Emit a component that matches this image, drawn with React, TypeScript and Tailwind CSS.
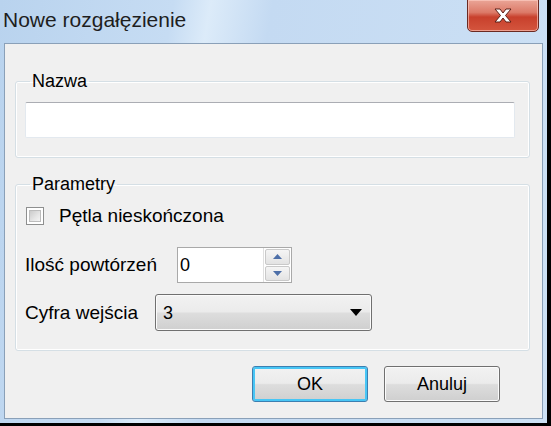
import React from "react";

function CloseX() {
  return (
    <svg width="18" height="15" viewBox="0 0 18 15">
      <polygon
        points="1,1 6,1 9,5 12,1 17,1 11.5,7.5 17,14 12,14 9,10 6,14 1,14 6.5,7.5"
        fill="#ffffff"
        stroke="#5a1e16"
        strokeWidth="1"
        strokeLinejoin="round"
      />
    </svg>
  );
}

function Win7Button({ label, focused }: { label: string; focused?: boolean }) {
  return (
    <div
      className={
        "w-[116px] h-[36px] rounded-[3px] border flex items-center justify-center text-[18px] text-black " +
        (focused
          ? "border-[#3c7fb1] shadow-[inset_0_0_0_2px_#48c6f5]"
          : "border-[#707070] shadow-[inset_0_0_0_1px_#fbfbfb]")
      }
      style={{
        background:
          "linear-gradient(180deg,#f2f2f2 0%,#ebebeb 48%,#dddddd 52%,#cfcfcf 100%)",
      }}
    >
      {label}
    </div>
  );
}

export default function App() {
  return (
    <div className="w-[551px] h-[426px] bg-black overflow-hidden font-['Liberation_Sans',Arial,sans-serif] text-black">
      <div className="w-[547px] h-[423px] flex flex-col bg-[linear-gradient(100deg,#b9d3ee_0%,#c6dcf3_28%,#dcebf9_34%,#c4daf2_44%,#cde1f5_100%)]">
        {/* Title bar */}
        <div className="h-[43px] flex items-start justify-between pl-[3px] pr-[8px]">
          <div className="mt-[7px] text-[21px] leading-[26px] text-[#1e1e1e]">Nowe rozgałęzienie</div>
          <div className="w-[72px] h-[33px] -mt-[1px] rounded-b-[5px] border border-[#6b2a22] flex items-center justify-center shadow-[inset_0_0_0_1px_rgba(255,210,200,0.6)] bg-[linear-gradient(180deg,#eaa597_0%,#dc7a68_40%,#c8402c_55%,#d4553e_100%)]">
            <CloseX />
          </div>
        </div>
        {/* Client area */}
        <div className="flex-1 mx-[4px] mb-[4px] border border-[#8aa0b8] bg-[#f0f0f0] flex flex-col">
          {/* Nazwa */}
          <fieldset className="mt-[27px] ml-[10px] mr-[12px] border border-[#d5dfe5] rounded-[3px] pl-[9px] pr-[14px] pb-[19px] shadow-[inset_0_0_0_1px_#ffffff]">
            <legend className="ml-[5px] px-[2px] text-[18px] leading-[20px]">Nazwa</legend>
            <div className="mt-[11px] h-[36px] bg-white border border-[#e3e9ef] border-t-[#abadb3] rounded-[2px]" />
          </fieldset>
          {/* Parametry */}
          <fieldset className="mt-[16px] ml-[10px] mr-[12px] border border-[#d5dfe5] rounded-[3px] pl-[9px] pr-[14px] pb-[19px] shadow-[inset_0_0_0_1px_#ffffff]">
            <legend className="ml-[5px] px-[2px] text-[18px] leading-[20px]">Parametry</legend>
            <div className="mt-[12px] h-[20px] flex items-center">
              <div className="ml-[1px] w-[18px] h-[18px] border border-[#8e8f8f] bg-white p-[2px]">
                <div className="w-full h-full border border-[#bcbcbc] bg-[linear-gradient(135deg,#cbcbcb_0%,#e6e6e6_60%,#f4f4f4_100%)]" />
              </div>
              <span className="ml-[15px] text-[19px] leading-[20px]">Pętla nieskończona</span>
            </div>
            <div className="mt-[21px] h-[36px] flex items-center">
              <span className="w-[152px] text-[19px] leading-[20px]">Ilość powtórzeń</span>
              <div className="w-[115px] h-[36px] bg-white border border-[#a9a9a9] flex">
                <div className="flex-1 pl-[2px] flex items-center text-[18px] leading-[20px]">0</div>
                <div className="w-[28px] flex flex-col border-l border-[#e0e0e0] p-[1px] gap-[1px]">
                  <div className="flex-1 rounded-[2px] border border-[#c9c9c9] bg-[linear-gradient(180deg,#f5f5f5,#e3e3e3)] flex items-center justify-center">
                    <svg width="9" height="5" viewBox="0 0 9 5"><polygon points="0,5 9,5 4.5,0" fill="#4d6fa8" /></svg>
                  </div>
                  <div className="flex-1 rounded-[2px] border border-[#c9c9c9] bg-[linear-gradient(180deg,#f5f5f5,#e3e3e3)] flex items-center justify-center">
                    <svg width="9" height="5" viewBox="0 0 9 5"><polygon points="0,0 9,0 4.5,5" fill="#4d6fa8" /></svg>
                  </div>
                </div>
              </div>
            </div>
            <div className="mt-[11px] h-[37px] flex items-center">
              <span className="w-[130px] text-[19px] leading-[20px]">Cyfra wejścia</span>
              <div className="w-[217px] h-[37px] rounded-[3px] border border-[#707070] shadow-[inset_0_0_0_1px_#fbfbfb] flex items-center pl-[7px] pr-[9px] bg-[linear-gradient(180deg,#f2f2f2_0%,#ebebeb_48%,#dddddd_52%,#cfcfcf_100%)]">
                <span className="flex-1 text-[18px] leading-[20px]">3</span>
                <svg width="12" height="7" viewBox="0 0 12 7"><polygon points="0,0 12,0 6,7" fill="#000000" /></svg>
              </div>
            </div>
          </fieldset>
          {/* Buttons */}
          <div className="mt-[15px] mr-[42px] flex justify-end gap-[16px]">
            <Win7Button label="OK" focused />
            <Win7Button label="Anuluj" />
          </div>
        </div>
      </div>
    </div>
  );
}
